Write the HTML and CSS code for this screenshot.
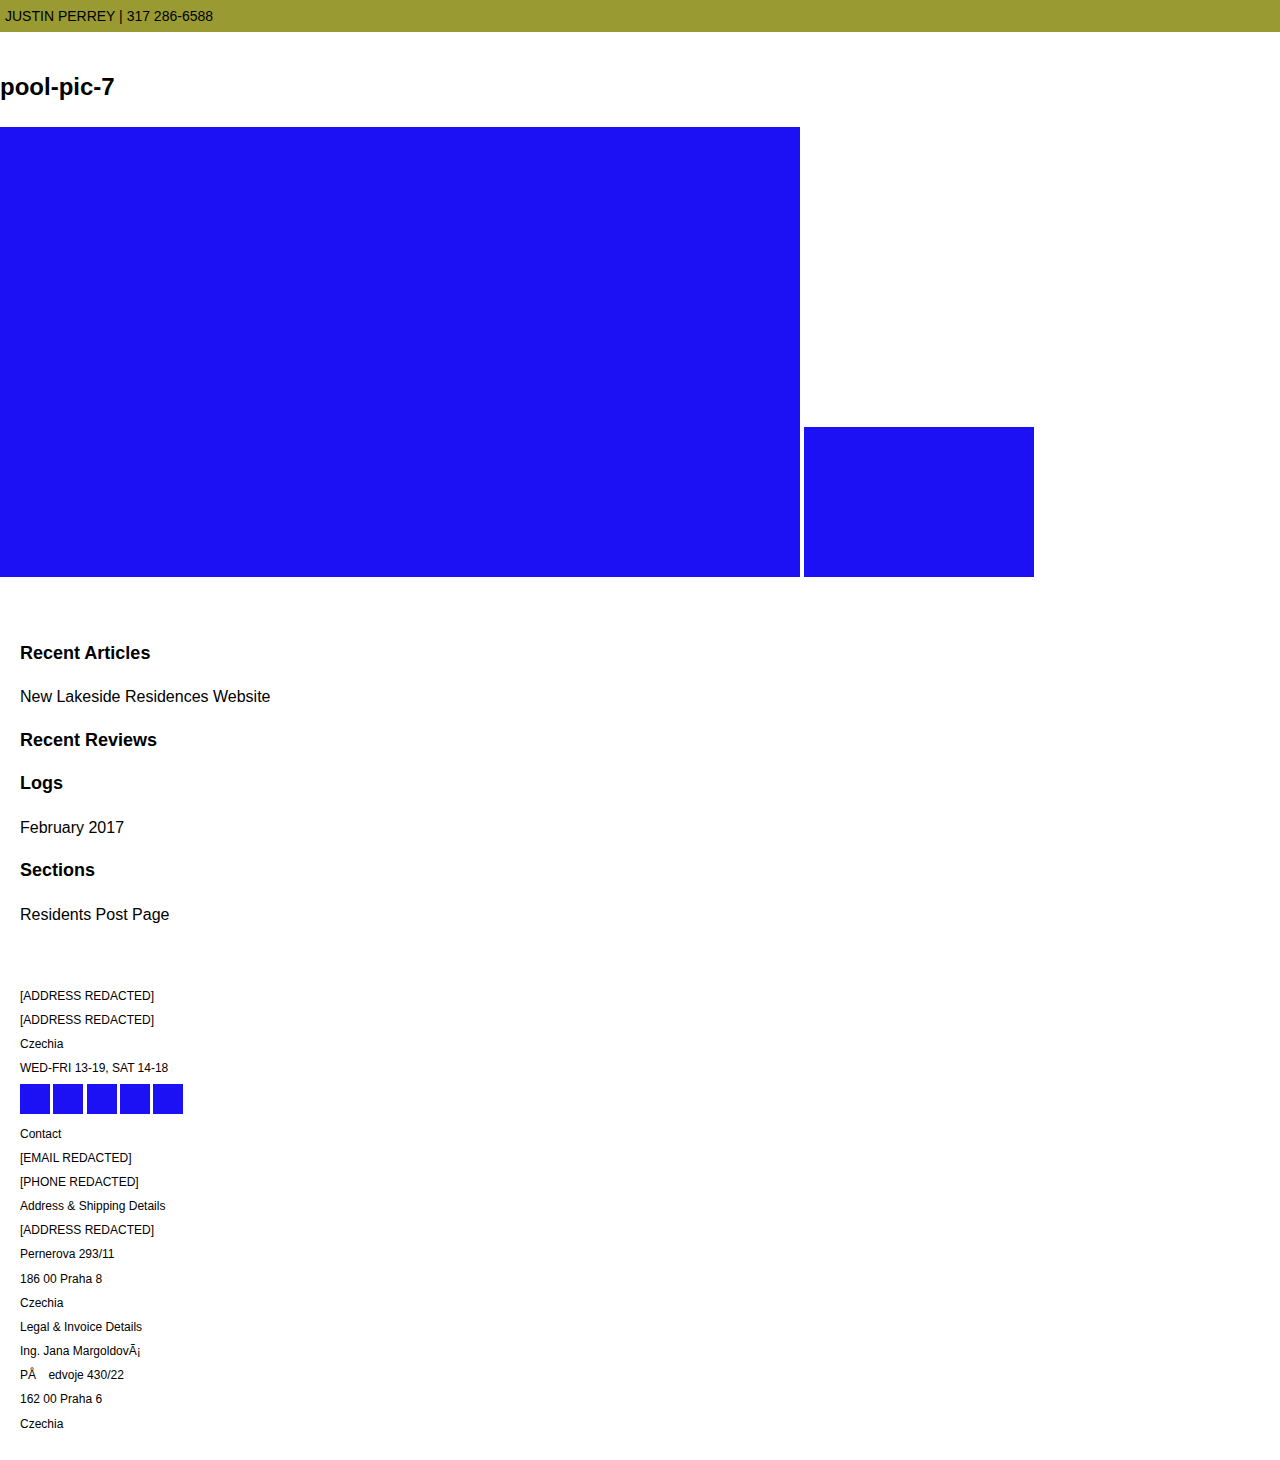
FILE: index.html
```html
<!DOCTYPE html>
<html lang="en">
<head>
<meta charset="utf-8">
<title>pool-pic-7</title>
<link rel="stylesheet" href="styles.css">
</head>
<body>
<div class="topbar">JUSTIN PERREY | 317 286-6588</div>
<h1 class="title">pool-pic-7</h1>
<div class="gallery">
  <div class="pic pic-large"></div>
  <div class="pic pic-small"></div>
</div>
<aside class="sidebar">
  <h3 class="side-head">Recent Articles</h3>
  <p class="side-item">New Lakeside Residences Website</p>
  <h3 class="side-head">Recent Reviews</h3>
  <h3 class="side-head">Logs</h3>
  <p class="side-item">February 2017</p>
  <h3 class="side-head">Sections</h3>
  <p class="side-item">Residents Post Page</p>
</aside>
<footer class="footer">
  <div class="block">
    <p class="line">[ADDRESS REDACTED]</p>
    <p class="line">[ADDRESS REDACTED]</p>
    <p class="line">Czechia</p>
    <p class="line">WED-FRI 13-19, SAT 14-18</p>
  </div>
  <div class="socials">
    <span class="sq"></span><span class="sq"></span><span class="sq"></span><span class="sq"></span><span class="sq"></span>
  </div>
  <div class="block block-tight">
    <p class="line">Contact</p>
    <p class="line">[EMAIL REDACTED]</p>
    <p class="line">[PHONE REDACTED]</p>
    <p class="line">Address &amp; Shipping Details</p>
    <p class="line">[ADDRESS REDACTED]</p>
    <p class="line">Pernerova 293/11</p>
    <p class="line">186 00 Praha 8</p>
    <p class="line">Czechia</p>
    <p class="line">Legal &amp; Invoice Details</p>
    <p class="line">Ing. Jana MargoldovÃ¡</p>
    <p class="line">PÅ&nbsp;&nbsp;&nbsp;&#x2009;edvoje 430/22</p>
    <p class="line">162 00 Praha 6</p>
    <p class="line">Czechia</p>
  </div>
</footer>
</body>
</html>
```
FILE: styles.css
```css
html, body {
  margin: 0;
  padding: 0;
  background: #ffffff;
  color: #000000;
  font-family: "Liberation Sans", Arial, sans-serif;
}

.topbar {
  height: 32px;
  line-height: 32px;
  padding-left: 5px;
  font-size: 14px;
  background: #9a9a32;
  color: #000;
}

.title {
  margin: 41px 0 26px 0;
  font-size: 24px;
  line-height: 28px;
  font-weight: bold;
}

.gallery {
  display: flex;
  align-items: flex-end;
  gap: 4px;
}

.pic {
  background: #1c10f5;
  flex: none;
}

.pic-large {
  width: 800px;
  height: 450px;
}

.pic-small {
  width: 230px;
  height: 150px;
}

.sidebar {
  margin-top: 54.5px;
  padding-left: 20px;
}

.side-head {
  margin: 0;
  font-size: 18px;
  font-weight: bold;
  line-height: 43.5px;
}

.side-item {
  margin: 0;
  font-size: 16px;
  line-height: 43.5px;
}

.footer {
  margin-top: 47.5px;
  padding-left: 20px;
  padding-bottom: 25px;
  font-size: 12px;
}

.line {
  margin: 0;
  line-height: 24.3px;
}

.block-tight .line {
  line-height: 24.15px;
}

.socials {
  display: flex;
  gap: 3.3px;
  margin: 3px 0 8px 0;
}

.sq {
  display: block;
  width: 30px;
  height: 30px;
  background: #1c10f5;
}
```
